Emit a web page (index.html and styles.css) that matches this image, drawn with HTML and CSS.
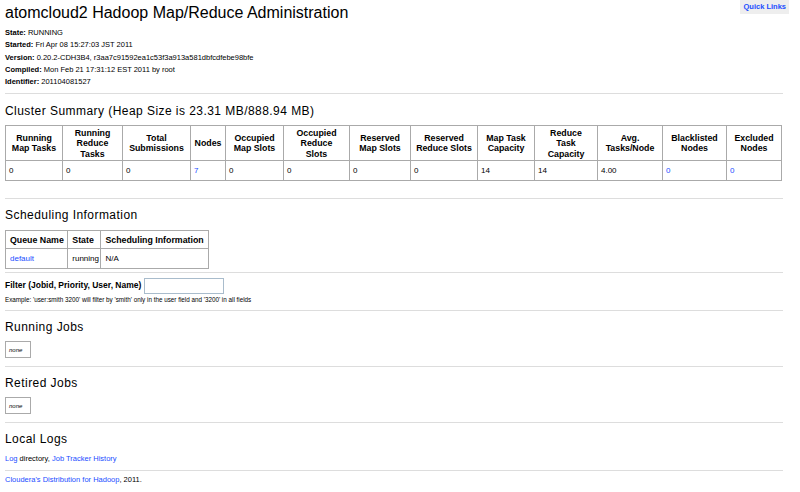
FILE: index.html
```html
<!DOCTYPE html>
<html>
<head>
<meta charset="utf-8">
<title>atomcloud2 Hadoop Map/Reduce Administration</title>
<link rel="stylesheet" href="styles.css">
</head>
<body>
<div class="quick-links"><a href="#">Quick Links</a></div>
<h1 class="title">atomcloud2 Hadoop Map/Reduce Administration</h1>
<div class="info">
  <div><b>State:</b> RUNNING</div>
  <div><b>Started:</b> Fri Apr 08 15:27:03 JST 2011</div>
  <div><b>Version:</b> 0.20.2-CDH3B4, r3aa7c91592ea1c53f3a913a581dbfcdfebe98bfe</div>
  <div><b>Compiled:</b> Mon Feb 21 17:31:12 EST 2011 by root</div>
  <div><b>Identifier:</b> 201104081527</div>
</div>
<hr class="rule">
<h2 class="section first">Cluster Summary (Heap Size is 23.31 MB/888.94 MB)</h2>
<table class="grid summary">
  <colgroup>
    <col><col><col><col><col><col><col><col><col><col><col><col><col>
  </colgroup>
  <tr class="head">
    <th>Running<br>Map Tasks</th><th>Running<br>Reduce<br>Tasks</th><th>Total<br>Submissions</th><th>Nodes</th>
    <th>Occupied<br>Map Slots</th><th>Occupied<br>Reduce<br>Slots</th><th>Reserved<br>Map Slots</th><th>Reserved<br>Reduce Slots</th>
    <th>Map Task<br>Capacity</th><th>Reduce<br>Task<br>Capacity</th><th>Avg.<br>Tasks/Node</th><th>Blacklisted<br>Nodes</th><th>Excluded<br>Nodes</th>
  </tr>
  <tr class="data">
    <td>0</td><td>0</td><td>0</td><td><a href="#">7</a></td><td>0</td><td>0</td><td>0</td><td>0</td>
    <td>14</td><td>14</td><td>4.00</td><td><a href="#">0</a></td><td><a href="#">0</a></td>
  </tr>
</table>
<hr class="rule after-summary">
<h2 class="section">Scheduling Information</h2>
<table class="grid sched">
  <colgroup><col><col><col></colgroup>
  <tr class="head"><th>Queue Name</th><th>State</th><th>Scheduling Information</th></tr>
  <tr class="data"><td><a href="#">default</a></td><td>running</td><td>N/A</td></tr>
</table>
<hr class="rule after-sched">
<form class="filter">
  <div class="filter-row"><b>Filter (Jobid, Priority, User, Name)</b><input type="text" class="filter-input"></div>
  <div class="example">Example: 'user:smith 3200' will filter by 'smith' only in the user field and '3200' in all fields</div>
</form>
<hr class="rule after-filter">
<h2 class="section">Running Jobs</h2>
<table class="grid none"><tr><td><i>none</i></td></tr></table>
<hr class="rule after-jobs">
<h2 class="section">Retired Jobs</h2>
<table class="grid none"><tr><td><i>none</i></td></tr></table>
<hr class="rule after-jobs">
<h2 class="section">Local Logs</h2>
<div class="logs"><a href="#">Log</a> directory, <a href="#">Job Tracker History</a></div>
<hr class="rule after-logs">
<div class="footer"><a href="#">Cloudera's Distribution for Hadoop</a>, 2011.</div>
</body>
</html>
```
FILE: styles.css
```css
html, body {
  margin: 0;
  padding: 0;
  background: #fff;
}
body {
  padding: 0 17px 0 5px;
  font-family: "Liberation Sans", Arial, sans-serif;
  color: #000;
  position: relative;
}
a {
  color: #1a4dff;
  text-decoration: none;
}

.quick-links {
  position: absolute;
  top: 0;
  right: 11px;
  background: #eeeeee;
  padding: 2px 3px;
  font-size: 7.5px;
  font-weight: bold;
  line-height: 10px;
}

.title {
  margin: 0;
  padding-top: 2px;
  font-size: 16px;
  font-weight: normal;
  line-height: 21px;
}

.info {
  margin-top: 4px;
  font-size: 7.5px;
  line-height: 12.3px;
}

.rule {
  border: 0;
  height: 1px;
  background: #dddddd;
  margin: 5px 0 0 0;
}

.section {
  margin: 8px 0 0 0;
  font-size: 12px;
  font-weight: normal;
  line-height: 16px;
  letter-spacing: 0.45px;
}
.section.first { margin-top: 9px; }

.grid {
  border-collapse: collapse;
  border: 1px solid #888;
  font-size: 8px;
}
.grid th, .grid td {
  border: 1px solid #aaa;
  padding: 0 3px;
}
.grid th {
  font-weight: bold;
  font-size: 8.8px;
  text-align: center;
  line-height: 10.5px;
}
.grid td {
  text-align: left;
}

.summary {
  margin-top: 6px;
  table-layout: fixed;
  width: 777px;
}
.summary .head { height: 35px; }
.summary .data { height: 20px; }
.summary col:nth-child(1) { width: 57px; }
.summary col:nth-child(2) { width: 60px; }
.summary col:nth-child(3) { width: 68px; }
.summary col:nth-child(4) { width: 35px; }
.summary col:nth-child(5) { width: 58px; }
.summary col:nth-child(6) { width: 66px; }
.summary col:nth-child(7) { width: 61px; }
.summary col:nth-child(8) { width: 67px; }
.summary col:nth-child(9) { width: 57px; }
.summary col:nth-child(10) { width: 63px; }
.summary col:nth-child(11) { width: 65px; }
.summary col:nth-child(12) { width: 64px; }
.summary col:nth-child(13) { width: 55px; }
.summary th { padding: 0 1px; }

.after-summary { margin-top: 17px; }

.sched {
  margin-top: 7px;
  table-layout: fixed;
  width: 204px;
}
.sched col:nth-child(1) { width: 62px; }
.sched col:nth-child(2) { width: 33px; }
.sched col:nth-child(3) { width: 107px; }
.sched .head { height: 18px; }
.sched .data { height: 20px; }
.sched th { text-align: left; padding: 0 2px 0 4px; }
.sched td { padding: 0 2px 0 4px; }

.after-sched { margin-top: 3px; }

.filter {
  margin: 4px 0 0 0;
}
.filter-row {
  font-size: 8.5px;
  line-height: 17px;
  display: flex;
  align-items: center;
  gap: 3px;
}
.filter-input {
  width: 80px;
  height: 16px;
  box-sizing: border-box;
  border: 1px solid #a9bccc;
  margin: 0;
  padding: 0;
}
.example {
  font-size: 6.3px;
  line-height: 8px;
  margin-top: 2px;
}

.after-filter { margin-top: 6px; }

.none {
  margin-top: 6px;
  width: 26px;
  height: 17px;
}
.none td {
  font-size: 6px;
  padding: 0 3px;
}

.after-jobs { margin-top: 8px; }

.logs {
  margin-top: 7px;
  font-size: 7.5px;
  line-height: 10px;
}

.after-logs { margin-top: 6px; }

.footer {
  margin-top: 4px;
  font-size: 7.5px;
  line-height: 10px;
}
```
